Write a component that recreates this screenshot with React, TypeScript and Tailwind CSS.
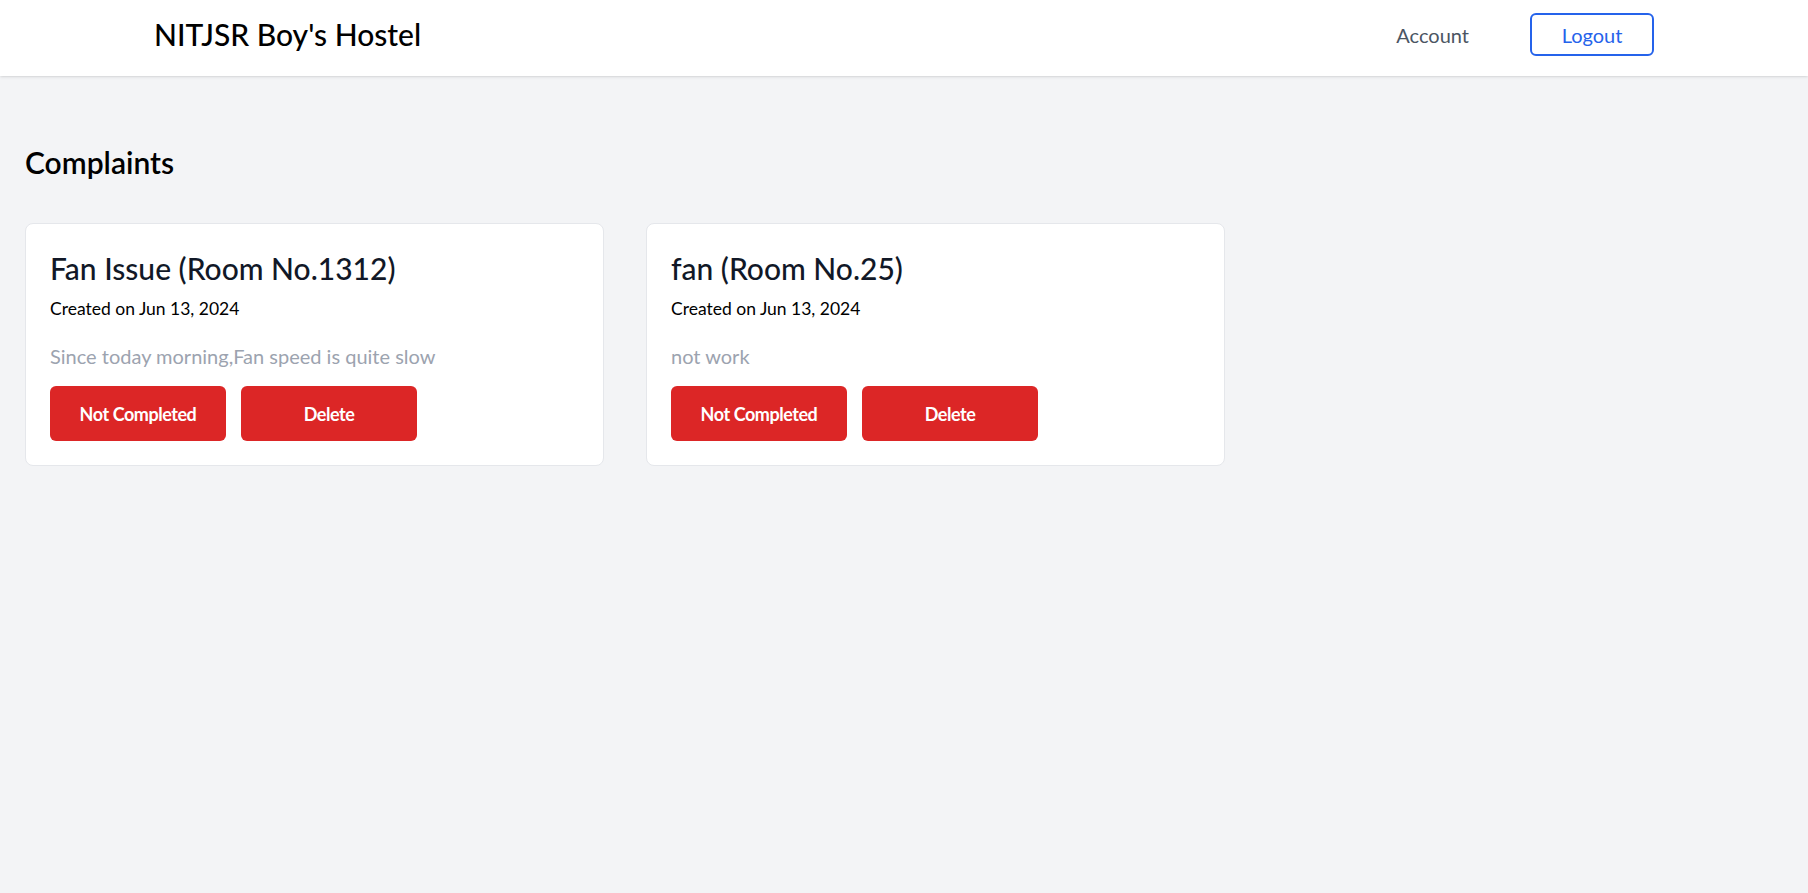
import React from 'react';

type Complaint = {
  id: number;
  title: string;
  room: string;
  created: string;
  description: string;
};

const complaints: Complaint[] = [
  {
    id: 1,
    title: 'Fan Issue',
    room: '1312',
    created: 'Jun 13, 2024',
    description: 'Since today morning,Fan speed is quite slow',
  },
  {
    id: 2,
    title: 'fan',
    room: '25',
    created: 'Jun 13, 2024',
    description: 'not work',
  },
];

const Navbar = () => {
  return (
    <header className="bg-white shadow-sm pt-3 pb-[19px]">
      <div className="mx-auto w-[1500px] h-[45px] flex items-center justify-between">
        <h1 className="text-[30px] font-medium text-black">NITJSR Boy's Hostel</h1>
        <div className="flex items-center">
          <a href="#" className="text-xl text-[#4b5563] mr-[61px]">
            Account
          </a>
          <button className="w-[124px] h-[43px] border-2 border-[#2563eb] rounded-md text-xl text-[#2563eb]">
            Logout
          </button>
        </div>
      </div>
    </header>
  );
};

const ComplaintCard = ({ complaint }: { complaint: Complaint }) => {
  return (
    <div className="w-[579px] bg-white border border-[#e5e7eb] rounded-lg p-6">
      <h3 className="text-[30px] leading-10 font-medium text-[#111827]">
        {complaint.title} (Room No.{complaint.room})
      </h3>
      <p className="mt-[7px] text-[17.5px] leading-7 text-black">Created on {complaint.created}</p>
      <p className="mt-[19px] text-xl text-[#9ca3af]">{complaint.description}</p>
      <div className="mt-4 flex gap-[15px]">
        <button className="w-44 h-[55px] bg-[#dc2626] rounded-md text-lg font-bold tracking-tight text-white">
          Not Completed
        </button>
        <button className="w-44 h-[55px] bg-[#dc2626] rounded-md text-lg font-bold tracking-tight text-white">
          Delete
        </button>
      </div>
    </div>
  );
};

const App = () => {
  return (
    <div className="min-h-screen bg-[#f3f4f6]" style={{ fontFamily: 'Lato, "Noto Sans", sans-serif' }}>
      <Navbar />
      <main className="px-[25px] pt-[68px]">
        <h2 className="text-3xl font-semibold text-black">Complaints</h2>
        <div className="mt-[43px] flex flex-wrap gap-[42px]">
          {complaints.map((c) => (
            <ComplaintCard key={c.id} complaint={c} />
          ))}
        </div>
      </main>
    </div>
  );
};

export default App;
